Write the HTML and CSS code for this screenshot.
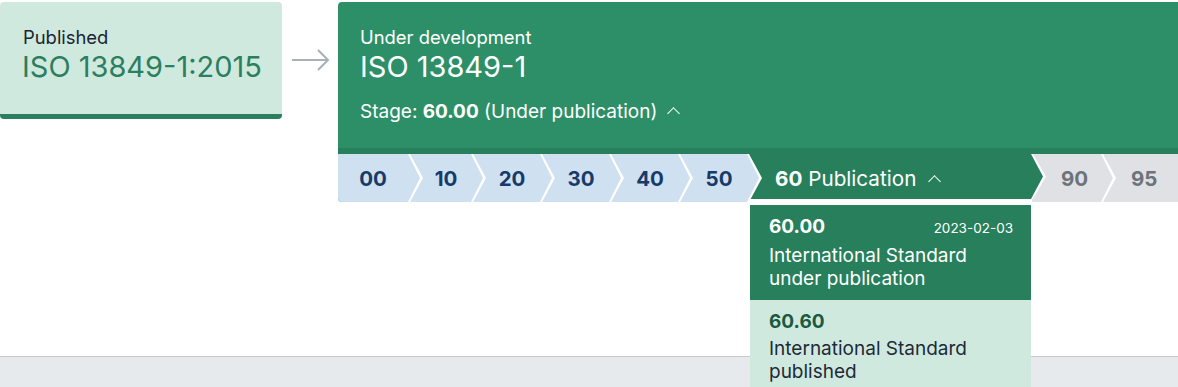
FILE: index.html
```html
<!DOCTYPE html>
<html lang="en">
	<head>
		<meta charset="UTF-8" />
		<meta name="viewport" content="width=device-width, initial-scale=1.0" />
		<title>ISO 13849-1 lifecycle</title>
		<link rel="stylesheet" href="styles.css">
	</head>
	<body>
		<div class="timeline">
			<div class="card previous">
				<div class="label">Published</div>
				<div class="ref">ISO 13849-1:2015</div>
			</div>
			<div class="next-arrow">
				<svg width="40" height="24" viewBox="0 0 40 24">
					<path d="M2 12 H38 M28 2 L38 12 L28 22" fill="none" stroke="#a9b0b8" stroke-width="2" />
				</svg>
			</div>
			<div class="card current">
				<div class="current-head">
					<div class="label">Under development</div>
					<div class="ref">ISO 13849-1</div>
					<div class="stage-line">Stage: <b>60.00</b> (Under publication) <span class="caret"></span></div>
				</div>
				<div class="stages">
					<div class="stage done first">00</div>
					<div class="stage done">10</div>
					<div class="stage done">20</div>
					<div class="stage done">30</div>
					<div class="stage done">40</div>
					<div class="stage done">50</div>
					<div class="stage active">
						<b>60</b>&nbsp;Publication <span class="caret"></span>
						<div class="substages">
							<div class="substage on">
								<div class="sub-top"><b>60.00</b><span class="date">2023-02-03</span></div>
								<div class="sub-text">International Standard under publication</div>
							</div>
							<div class="substage">
								<div class="sub-top"><b>60.60</b></div>
								<div class="sub-text">International Standard published</div>
							</div>
						</div>
					</div>
					<div class="stage todo">90</div>
					<div class="stage todo last">95</div>
				</div>
			</div>
		</div>
		<div class="footer"></div>
	</body>
</html>
```

FILE: styles.css
```css
body {
	margin: 0;
	font-family: Inter, "Noto Sans", sans-serif;
	color: #1e2a38;
	background: #fff;
	overflow: hidden;
}
.timeline {
	display: flex;
	align-items: flex-start;
	padding-top: 2px;
	height: 354px;
}
.card {
	border-radius: 4px;
}
.previous {
	width: 282px;
	height: 112px;
	box-sizing: content-box;
	background-color: #d0e9df;
	border-bottom: 5px solid #2b7f5e;
}
.previous .label {
	padding: 24px 0 0 23px;
	font-size: 18.4px;
	color: #1b2433;
}
.previous .ref {
	padding-left: 22px;
	margin-top: 1px;
	font-size: 29px;
	color: #2b7f5e;
}
.next-arrow {
	width: 56px;
	display: flex;
	justify-content: center;
	padding-top: 46px;
}
.current {
	flex: 1;
	background-color: #2d8f67;
	color: #fff;
	border-radius: 4px 0 0 4px;
}
.current-head {
	height: 152px;
	box-sizing: border-box;
	padding: 24px 22px 0 22px;
	border-bottom: 6px solid #277f5b;
}
.current .label {
	font-size: 18.4px;
}
.current .ref {
	margin-top: 1px;
	font-size: 29px;
}
.stage-line {
	font-size: 19px;
	margin-top: 16px;
}
.caret {
	display: inline-block;
	width: 8px;
	height: 8px;
	border-left: 1.6px solid currentColor;
	border-top: 1.6px solid currentColor;
	transform: rotate(45deg);
	margin-left: 6px;
	vertical-align: 0px;
}
.stages {
	display: flex;
	height: 48px;
}
.stage {
	position: relative;
	display: flex;
	align-items: center;
	justify-content: center;
	font-size: 20.5px;
	font-weight: 700;
	box-sizing: border-box;
	padding-left: 12px;
}
.stage::before,
.stage::after {
	content: "";
	position: absolute;
	top: 0;
	height: 48px;
	z-index: 1;
}
.stage::before {
	right: -15px;
	width: 15px;
	background: #fff;
	clip-path: polygon(0 0, 2px 0, 15px 50%, 2px 100%, 0 100%);
}
.stage::after {
	right: -12px;
	width: 12px;
	clip-path: polygon(0 0, 100% 50%, 0 100%);
}
.stage.last::before,
.stage.last::after {
	display: none;
}
.done {
	width: 69px;
	background-color: #cfe0f1;
	color: #173b69;
	border-left: 1px solid #fff;
}
.done::after {
	background-color: #cfe0f1;
}
.first {
	width: 70px;
	padding-left: 0;
	border-left: none;
	border-bottom-left-radius: 4px;
}
.first + .done {
	width: 63px;
}
.active {
	width: 284px;
	background-color: #277f5b;
	color: #fff;
	font-size: 20.7px;
	font-weight: 400;
	justify-content: flex-start;
	padding-left: 27px;
	padding-top: 3px;
	border-bottom: 3px solid #fff;
	border-left: 1px solid #fff;
}
.active b {
	font-weight: 700;
}
.active .caret {
	margin-left: 14px;
	margin-top: 6px;
}
.active::after {
	background-color: #277f5b;
	height: 45px;
}
.active::before {
	height: 45px;
}
.todo {
	width: 70px;
	background-color: #dfe1e5;
	color: #6c737a;
	border-left: 1px solid #fff;
	padding-left: 16px;
}
.todo::after {
	background-color: #dfe1e5;
}
.last {
	flex: 1;
	justify-content: flex-start;
	padding-left: 29px;
}
.substages {
	position: absolute;
	top: 51px;
	left: 2px;
	right: 0;
	z-index: 2;
	font-size: 19px;
}
.substage {
	background-color: #d0e9df;
	color: #1e2a38;
	padding: 10px 18px 10px 19px;
	line-height: 23px;
}
.substage.on {
	background-color: #277f5b;
	color: #fff;
}
.substage b {
	color: #1b5a40;
}
.substage.on b {
	color: #fff;
}
.sub-top {
	display: flex;
	justify-content: space-between;
	align-items: baseline;
	margin-bottom: 4px;
}
.date {
	font-size: 13.5px;
}
.sub-text {
	font-weight: 400;
	width: 220px;
}
.footer {
	height: 40px;
	background-color: #e6eaed;
	border-top: 1px solid #c8c9cb;
}
```
